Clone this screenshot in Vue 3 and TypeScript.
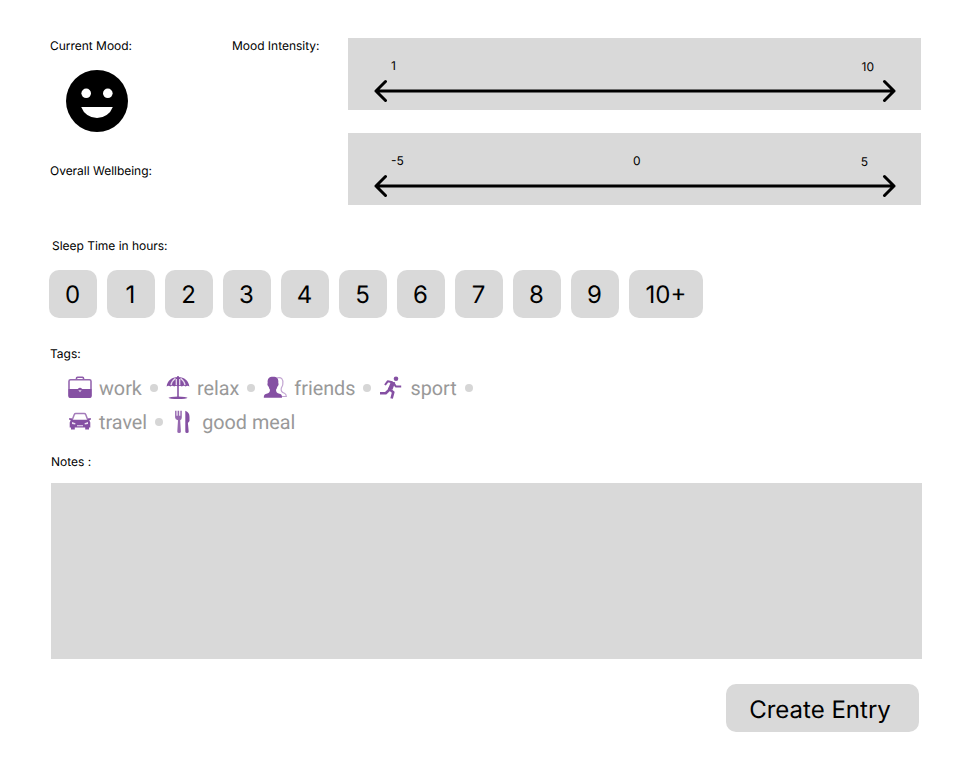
<script setup lang="ts">
import { ref } from 'vue'

interface Tag {
  icon: string
  label: string
}

const scales: { name: string; marks: string[] }[] = [
  { name: 'intensity', marks: ['1', '', '10'] },
  { name: 'wellbeing', marks: ['-5', '0', '5'] },
]

const hours: string[] = ['0', '1', '2', '3', '4', '5', '6', '7', '8', '9', '10+']

const tagRows: Tag[][] = [
  [
    { icon: 'work', label: 'work' },
    { icon: 'relax', label: 'relax' },
    { icon: 'friends', label: 'friends' },
    { icon: 'sport', label: 'sport' },
  ],
  [
    { icon: 'travel', label: 'travel' },
    { icon: 'meal', label: 'good meal' },
  ],
]

const notes = ref('')
</script>

<template>
  <main class="page">
    <section class="top">
      <div class="mood">
        <p class="label">Current Mood:</p>
        <svg class="face" viewBox="0 0 62 62">
          <circle cx="31" cy="31" r="31" />
          <circle cx="20.2" cy="23.3" r="4.8" fill="#fff" />
          <circle cx="41.8" cy="23.3" r="4.8" fill="#fff" />
          <path d="M15.2 37h31.6a16.8 16.8 0 0 1-31.6 0z" fill="#fff" />
        </svg>
        <p class="label">Overall Wellbeing:</p>
      </div>
      <p class="label">Mood Intensity:</p>
      <div class="scales">
        <div v-for="scale in scales" :key="scale.name" class="scale" :class="scale.name">
          <div class="marks">
            <span v-for="(mark, i) in scale.marks" :key="i">{{ mark }}</span>
          </div>
          <svg class="arrow" viewBox="0 0 522 24">
            <path d="M2 12H520M11.5 2.500 2 12l9.500 9.500M510.500 2.500 520 12l-9.500 9.500" />
          </svg>
        </div>
      </div>
    </section>

    <p class="label sleep-label">Sleep Time in hours:</p>
    <div class="hours">
      <button v-for="hour in hours" :key="hour" class="hour" :class="{ wide: hour === '10+' }">{{ hour }}</button>
    </div>

    <p class="label tags-label">Tags:</p>
    <div class="tags">
      <div v-for="(row, r) in tagRows" :key="r" class="tag-row">
        <template v-for="tag in row" :key="tag.label">
          <svg class="icon" viewBox="0 0 24 24">
            <g v-if="tag.icon === 'work'">
              <path d="M8.500 3.500V2.200q0-1 1-1h5q1 0 1 1v1.300" fill="none" stroke="#8f5cab" stroke-width="1.600" />
              <rect x="1" y="3.700" width="22" height="17.600" rx="1.500" fill="#fff" stroke="#9668b0" stroke-width="1.600" />
              <path d="M.5 13h9.300q2.200-2.400 4.400 0h9.300v7q0 2-2 2h-19q-2 0-2-2z" />
              <path d="M10.300 14.200h3.400l-1.700 2z" fill="#e3d3eb" />
            </g>
            <g v-else-if="tag.icon === 'relax'">
              <path d="M.6 10.500C1.300 4.700 5.500.9 12 .9s10.700 3.800 11.400 9.600q-2-1.500-3.800 0-1.700-1.500-3.800 0-1.800-1.500-3.800-.2-2-1.300-3.800.2-2.100-1.500-3.800 0-1.800-1.500-3.800 0z" />
              <path d="M9.400 2.200Q5.500 5.200 5 9.200M14.600 2.200q3.900 3 4.400 7M10.300 3v6M13.700 3v6" fill="none" stroke="#e8dbee" stroke-width="1.300" />
              <path d="M11.200 0h1.600v21h-1.600z" />
              <ellipse cx="12" cy="21.800" rx="9.500" ry="1.300" />
            </g>
            <g v-else-if="tag.icon === 'friends'">
              <path d="M13.500 2c5-1.700 7 1.500 6.300 6.200-.2 2-1 2.500-1.500 4-.7 2.800.2 4.200 3.200 5.100q1.800.8 1.800 3.200h-5" fill="#fff" stroke="#c3a6d2" stroke-width="1.200" />
              <path d="M4.700 7C4.200 2.700 6.100.8 10 .8S15.800 2.700 15.300 7c.8 1.300 0 3-1 3.700-.4 1.700-.9 2.300-1.300 3.100 0 2.500 1.100 3.200 3.500 4 2.200.7 2.500 1.500 2.500 4H.8c0-2.500.5-3.300 2.700-4 2.400-.8 3.500-1.500 3.500-4-.4-.8-.9-1.400-1.300-3.100C4.700 10 3.900 8.300 4.700 7z" />
            </g>
            <g v-else-if="tag.icon === 'sport'">
              <circle cx="17" cy="2.700" r="2.300" />
              <path d="M14.300 7.300 10.200 13l4.100 3.200-1.700 6.300M10 14l-3.300 3.200H1" fill="none" stroke="#8550a3" stroke-width="2.600" stroke-linejoin="round" />
              <path d="m13.500 6.300-4.800-1L6 9M14.500 6.800l2.300 3.800h5.400" fill="none" stroke="#8550a3" stroke-width="2" stroke-linejoin="round" />
              <path d="m12 5.200 4.200 1.300-2.700 7.300-4.300-1z" />
            </g>
            <g v-else-if="tag.icon === 'travel'">
              <path d="M4 10.500 6.300 4.500q.4-.9 1.500-.9h8.400q1.100 0 1.500.9L20 10.500" fill="#fff" stroke="#a47bba" stroke-width="1.500" />
              <path d="M1 8.200h2.700l.8 1.600h15l.8-1.600H23v1.300l-1.700.8 1 2.200v5h-1.300v2h-3.800v-2H6.800v2H3v-2H1.700v-5l1-2.200L1 9.500z" />
              <path d="m4 12 3.500 1.200-.3 1.400-3.200-.6zM20 12l-3.500 1.200.3 1.400 3.200-.6zM9 15.200h6v1.100H9z" fill="#eee2f3" />
            </g>
            <g v-else>
              <path d="M4.100.8h1.400v5h1.100v-5h1.600v5h1.100v-5h1.500v6.700q0 2-1.600 2.800l.7 11.200q0 1.500-1.800 1.500t-1.800-1.500L7 10.300q-2.900-.8-2.900-2.800z" fill="#9668b0" />
              <path d="M14.300.7q4.200 1.300 4.200 6.300v4l-1.600 2 .8 8.500q0 1.500-1.700 1.500t-1.700-1.500z" />
            </g>
          </svg>
          <span class="word">{{ tag.label }}</span>
          <span v-if="tag.icon !== 'meal'" class="dot"></span>
        </template>
      </div>
    </div>

    <p class="label notes-label">Notes :</p>
    <textarea v-model="notes" class="notes" aria-label="Notes"></textarea>
    <button class="create">Create Entry</button>
  </main>
</template>

<style>
body {
  background: #fff;
}
</style>

<style scoped>
.page {
  box-sizing: border-box;
  display: flex;
  flex-direction: column;
  width: 973px;
  height: 768px;
  padding: 38px 51px 36px 49px;
  font-family: Inter, 'Liberation Sans', sans-serif;
  color: #000;
  text-rendering: geometricPrecision;
}
.label {
  margin: 0;
  font-size: 12px;
  line-height: 15px;
  letter-spacing: -0.02px;
}
.top {
  display: grid;
  grid-template-columns: 182px 116px 573px;
  height: 167px;
  margin-left: 1px;
}
.face {
  display: block;
  width: 62px;
  height: 62px;
  margin: 17px 0 31px 16px;
}
.scales {
  display: flex;
  flex-direction: column;
  gap: 23px;
}
.scale {
  box-sizing: border-box;
  height: 72px;
  padding: 20px 25px 0 26px;
  background: #d9d9d9;
}
.marks {
  display: flex;
  justify-content: space-between;
  height: 21px;
  padding: 0 22px 0 17px;
  font-size: 12px;
  line-height: 15px;
}
.marks span:last-child {
  padding-top: 1px;
}
.wellbeing .marks {
  padding-right: 28px;
}
.wellbeing .marks span:nth-child(2) {
  padding-left: 9px;
}
.arrow {
  display: block;
  width: 522px;
  height: 24px;
  fill: none;
  stroke: #000;
  stroke-width: 3;
  stroke-linecap: round;
  stroke-linejoin: round;
}
.sleep-label {
  margin: 33px 0 17px 3px;
}
.hours {
  display: flex;
  gap: 10px;
}
.hour,
.create {
  height: 48px;
  padding: 0;
  border: 0;
  border-radius: 10px;
  background: #d9d9d9;
  color: #000;
  font-family: inherit;
  font-size: 24px;
  line-height: 29px;
  text-rendering: inherit;
}
.hour {
  width: 48px;
  padding-right: 1px;
}
.hour.wide {
  width: 74px;
  padding-right: 0;
}
.tags-label {
  margin: 28px 0 15px 1px;
}
.tags {
  display: flex;
  flex-direction: column;
  gap: 10px;
  padding-left: 19px;
}
.tag-row {
  display: flex;
  align-items: center;
  height: 24px;
}
.icon {
  width: 24px;
  height: 24px;
  margin-right: 7px;
  fill: #8550a3;
}
.word {
  padding-top: 1px;
  font-family: Roboto, sans-serif;
  font-size: 19.8px;
  line-height: 24px;
  color: #999;
}
.dot {
  width: 8px;
  height: 8px;
  margin: 0 8px;
  border-radius: 50%;
  background: #d6d6d6;
}
.notes-label {
  margin: 20px 0 14px 2px;
}
.notes {
  display: block;
  box-sizing: border-box;
  width: 871px;
  height: 176px;
  margin: 0 0 25px 2px;
  padding: 12px;
  border: 0;
  outline: 0;
  resize: none;
  background: #d9d9d9;
  font: inherit;
}
.create {
  align-self: flex-end;
  width: 193px;
  margin-right: 3px;
  padding: 2px 5px 0 0;
}
</style>
